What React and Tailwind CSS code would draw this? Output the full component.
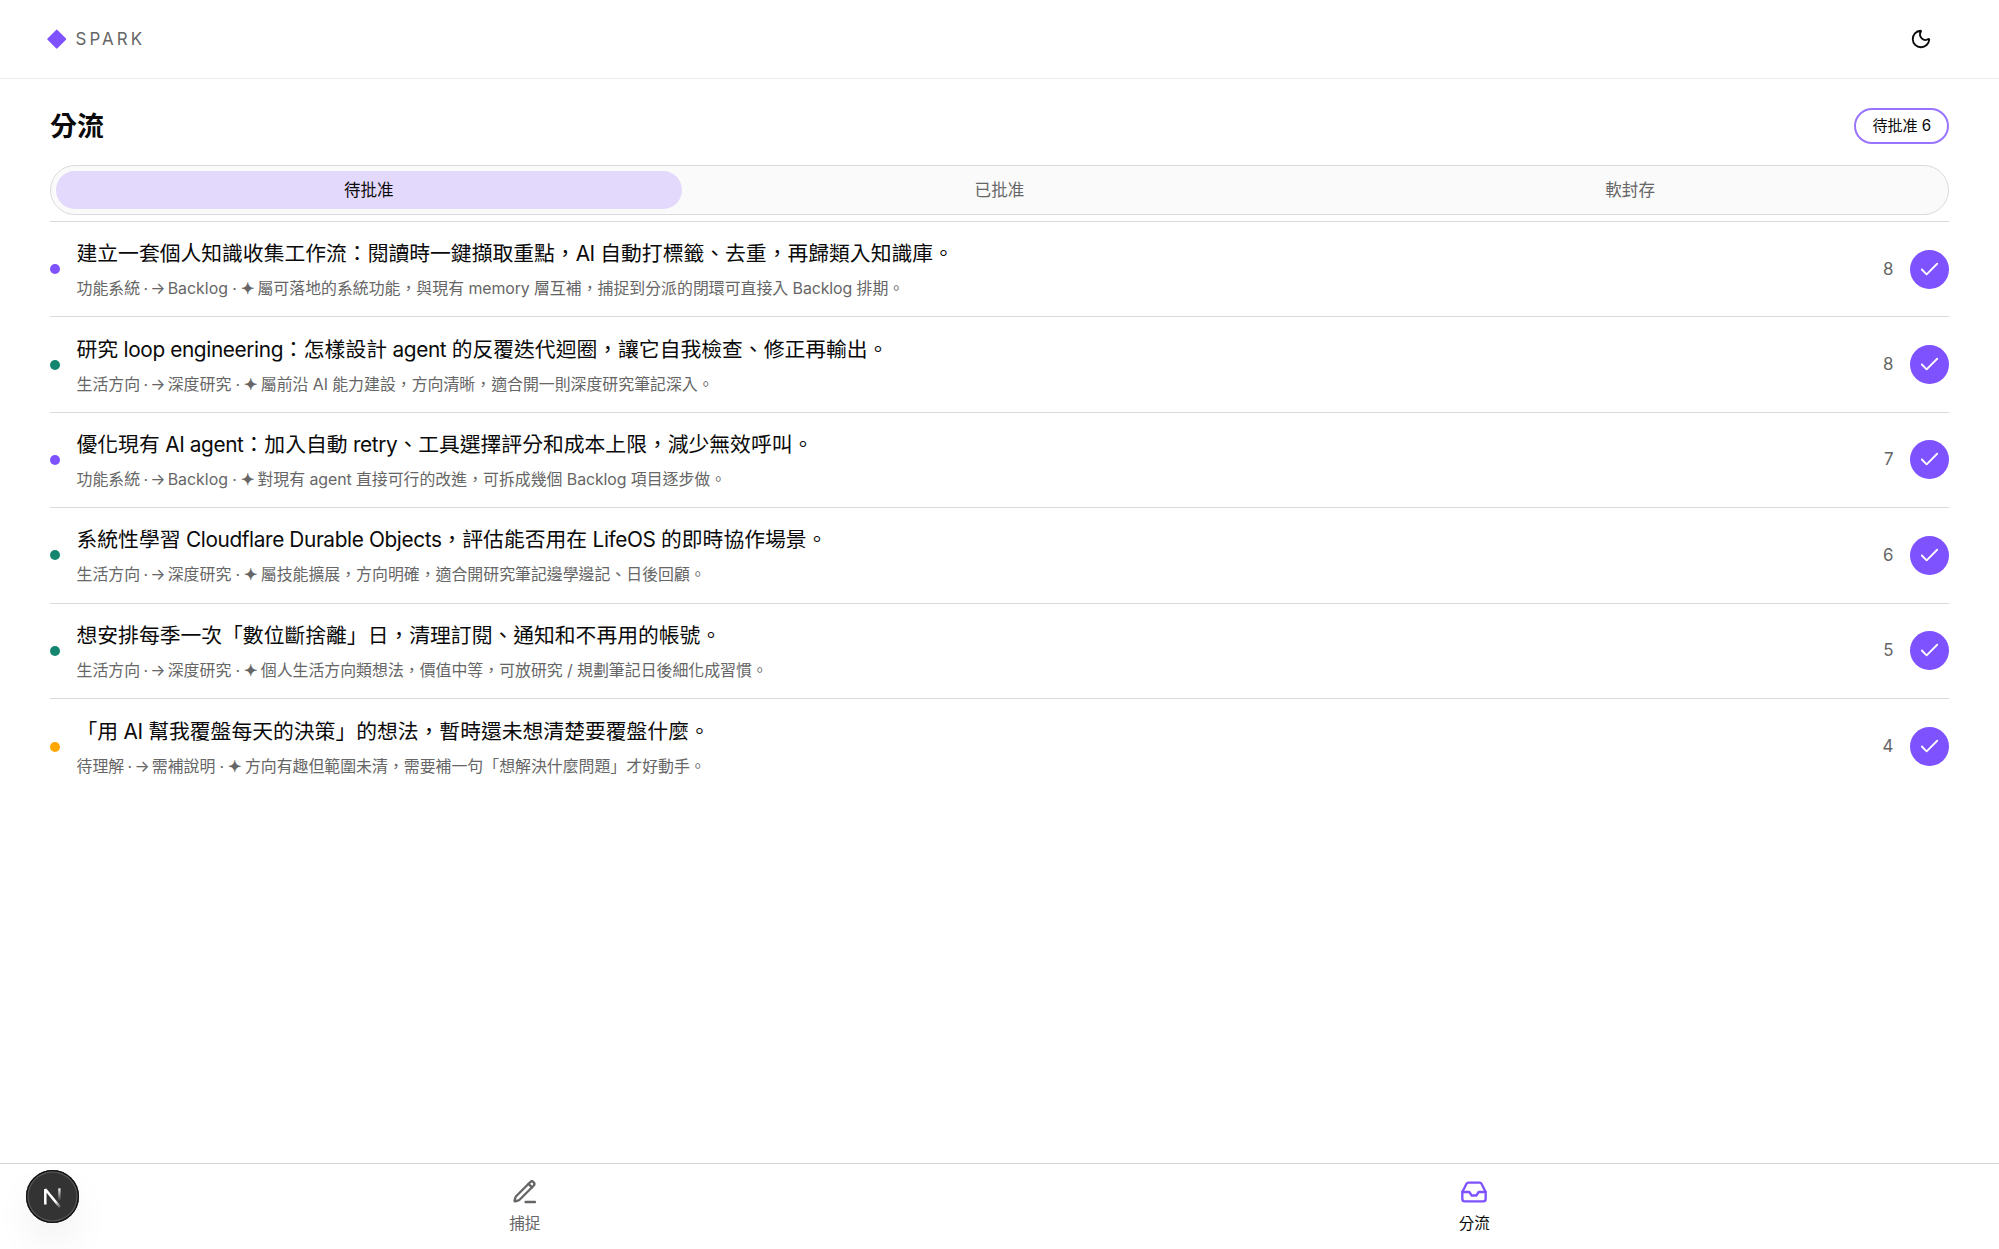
import React, { useState } from 'react';
import { Check, Moon } from 'lucide-react';

const ITEMS = [
    { id: 1, dot: 'bg-[#7f52ff]', score: 8, title: '建立一套個人知識收集工作流：閱讀時一鍵擷取重點，AI 自動打標籤、去重，再歸類入知識庫。', kind: '功能系統', target: 'Backlog', reason: '屬可落地的系統功能，與現有 memory 層互補，捕捉到分派的閉環可直接入 Backlog 排期。' },
    { id: 2, dot: 'bg-[#14856e]', score: 8, title: '研究 loop engineering：怎樣設計 agent 的反覆迭代迴圈，讓它自我檢查、修正再輸出。', kind: '生活方向', target: '深度研究', reason: '屬前沿 AI 能力建設，方向清晰，適合開一則深度研究筆記深入。' },
    { id: 3, dot: 'bg-[#7f52ff]', score: 7, title: '優化現有 AI agent：加入自動 retry、工具選擇評分和成本上限，減少無效呼叫。', kind: '功能系統', target: 'Backlog', reason: '對現有 agent 直接可行的改進，可拆成幾個 Backlog 項目逐步做。' },
    { id: 4, dot: 'bg-[#14856e]', score: 6, title: '系統性學習 Cloudflare Durable Objects，評估能否用在 LifeOS 的即時協作場景。', kind: '生活方向', target: '深度研究', reason: '屬技能擴展，方向明確，適合開研究筆記邊學邊記、日後回顧。' },
    { id: 5, dot: 'bg-[#14856e]', score: 5, title: '想安排每季一次「數位斷捨離」日，清理訂閱、通知和不再用的帳號。', kind: '生活方向', target: '深度研究', reason: '個人生活方向類想法，價值中等，可放研究 / 規劃筆記日後細化成習慣。' },
    { id: 6, dot: 'bg-[#ffa600]', score: 4, title: '「用 AI 幫我覆盤每天的決策」的想法，暫時還未想清楚要覆盤什麼。', kind: '待理解', target: '需補說明', reason: '方向有趣但範圍未清，需要補一句「想解決什麼問題」才好動手。' },
];

const TABS = ['待批准', '已批准', '軟封存'];

// Latin runs are set a little tighter than the Chinese around them
const MixedText = ({ text, latin }) =>
    text.split(/([ -~]+)/).map((part, i) =>
        i % 2 ? <span key={i} className={latin}>{part}</span> : part
    );

const PenIcon = () => (
    <svg className="size-[28px]" viewBox="0 0 24 24" fill="none" stroke="currentColor" strokeWidth="2" strokeLinecap="round" strokeLinejoin="round">
        <path d="M12.5 20.6h8" />
        <path d="M16.376 3.622a1 1 0 0 1 3.002 3.002L7.368 18.635a2 2 0 0 1-.855.506l-2.872.838a.5.5 0 0 1-.62-.62l.838-2.872a2 2 0 0 1 .506-.854z" />
        <path d="m15 5 3 3" />
    </svg>
);

const InboxIcon = () => (
    <svg className="size-[28px]" viewBox="0 0 24 24" fill="none" stroke="currentColor" strokeWidth="2" strokeLinecap="round" strokeLinejoin="round">
        <path d="M22 12h-6l-2 3h-4l-2-3H2" />
        <path d="M5.45 5.11 2 12v6a2 2 0 0 0 2 2h16a2 2 0 0 0 2-2v-6l-3.45-6.89A2 2 0 0 0 16.76 4H7.24a2 2 0 0 0-1.79 1.11z" />
    </svg>
);

const DevBadge = () => (
    <div className="absolute top-[6px] left-[26px] size-[53px] rounded-full bg-[#333] shadow-[inset_0_0_0_1.3px_#111,inset_0_0_0_2.6px_#555,0_20px_40px_-4px_rgba(0,0,0,0.08)]">
        <svg className="size-full" viewBox="0 0 53 53" fill="none">
            <defs>
                <linearGradient id="diag" x1="30" y1="31" x2="35" y2="38" gradientUnits="userSpaceOnUse">
                    <stop stopColor="#fff" />
                    <stop offset="1" stopColor="#fff" stopOpacity="0" />
                </linearGradient>
                <linearGradient id="stem" x1="34" y1="18" x2="34" y2="31" gradientUnits="userSpaceOnUse">
                    <stop stopColor="#fff" />
                    <stop offset="1" stopColor="#fff" stopOpacity="0" />
                </linearGradient>
            </defs>
            <path d="M19.3 34.6V19.2L34.2 37.4" stroke="url(#diag)" strokeWidth="2.5" strokeLinejoin="bevel" />
            <path d="M33.4 18.4V31" stroke="url(#stem)" strokeWidth="2.3" />
        </svg>
    </div>
);

const App = () => {
    const [activeTab, setActiveTab] = useState('待批准');

    return (
        <div className="flex h-screen flex-col overflow-hidden bg-white font-['Inter','Noto_Sans_CJK_TC',sans-serif] text-[#0a0a0a]">
            <header className="flex h-[79px] shrink-0 items-center justify-between border-b border-[#ebebeb] pr-[67px] pl-[50px]">
                <div className="flex items-center gap-[12px]">
                    <span className="size-[13.5px] rotate-45 rounded-[1px] bg-[#7f52ff]"></span>
                    <span className="mt-[1px] text-[16.9px] tracking-[3.1px] text-[#666]">SPARK</span>
                </div>
                <Moon className="mb-[1px] size-[22px]" />
            </header>

            <main className="flex grow flex-col px-[50px]">
                <div className="mt-[29px] flex h-[36px] items-center justify-between">
                    <h1 className="pt-[2px] text-[27px] font-bold">分流</h1>
                    <span className="flex h-[36px] items-center rounded-full border-2 border-[#7f52ff]/80 px-4 text-[15.2px] tracking-[-0.15px]">待批准 6</span>
                </div>

                <div className="mt-[21px] flex h-[50px] gap-[5px] rounded-full border border-[#dadada] bg-[#fafafa] p-[5px]">
                    {TABS.map((tab) => (
                        <button
                            key={tab}
                            onClick={() => setActiveTab(tab)}
                            className={`flex-1 rounded-full text-[16.6px] ${activeTab === tab ? 'bg-[#e3d9fc]' : 'text-[#666]'}`}
                        >
                            {tab}
                        </button>
                    ))}
                </div>

                <ul className="mt-[6px] border-t border-[#dadada]">
                    {ITEMS.map((item) => (
                        <li key={item.id} className="flex h-[95.4px] items-center border-b border-[#dadada] last:border-b-0">
                            <span className={`size-[10px] shrink-0 rounded-full ${item.dot}`}></span>
                            <div className="ml-[16.5px] grow pt-[3px] whitespace-nowrap">
                                <p className="text-[20.8px] leading-[34px]">
                                    <MixedText text={item.title} latin="tracking-[-0.38px]" />
                                </p>
                                <p className="mt-[2px] text-[15.9px] leading-[31px] text-[#666]">
                                    {item.kind}
                                    <span className="tracking-[-1.1px]"> · → </span>
                                    {item.target}
                                    <span className="tracking-[-0.3px]"> · <b>✦</b> </span>
                                    <MixedText text={item.reason} latin="tracking-[-0.1px]" />
                                </p>
                            </div>
                            <span className="mr-[16.5px] text-[16.9px] text-[#666]">{item.score}</span>
                            <button className="flex size-[39px] items-center justify-center rounded-full bg-[#7f52ff] text-white">
                                <Check className="size-[23px]" strokeWidth={1.9} />
                            </button>
                        </li>
                    ))}
                </ul>
            </main>

            <nav className="relative flex h-[86px] shrink-0 border-t border-[#d6d6d6] px-[50px]">
                <button className="flex flex-1 flex-col items-center pt-[14px] text-[15.6px] text-[#666]">
                    <PenIcon />
                    <span className="mt-[7px] leading-[22px]">捕捉</span>
                </button>
                <button className="flex flex-1 flex-col items-center pt-[14px] text-[15.6px]">
                    <span className="text-[#7f52ff]"><InboxIcon /></span>
                    <span className="mt-[7px] leading-[22px]">分流</span>
                </button>
                <DevBadge />
            </nav>
        </div>
    );
};

export default App;
